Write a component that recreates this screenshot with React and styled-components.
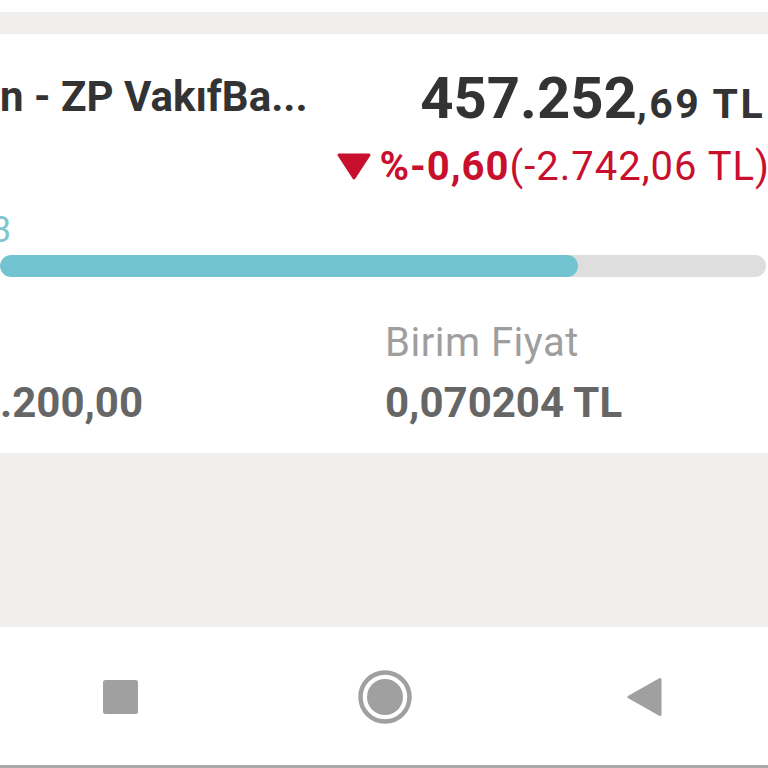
import React from "react";
import styled, { createGlobalStyle } from "styled-components";

const GlobalStyle = createGlobalStyle`
  html, body { margin: 0; padding: 0; background: #ffffff; overflow: hidden; }
  body { font-family: Roboto, "Noto Sans", "Liberation Sans", sans-serif; }
  * { box-sizing: border-box; }
`;

const Screen = styled.div`
  width: 768px;
  height: 768px;
  display: flex;
  flex-direction: column;
  overflow: hidden;
  background: #ffffff;
`;

const StatusGap = styled.div`
  height: 12px;
  flex: none;
  background: #ffffff;
`;

const Band = styled.div`
  height: ${(p) => p.$h}px;
  flex: ${(p) => (p.$h ? "none" : "1")};
  background: #f0efee;
`;

const Card = styled.section`
  height: 419px;
  flex: none;
  background: #ffffff;
  display: flex;
  flex-direction: column;
  padding-top: 35px;
`;

const HeaderRow = styled.div`
  display: flex;
  justify-content: space-between;
  align-items: flex-start;
`;

const Title = styled.h2`
  margin: 6px 0 0 0;
  font-size: 42px;
  line-height: 43px;
  font-weight: 700;
  color: #333333;
  white-space: nowrap;
`;

const RightCol = styled.div`
  display: flex;
  flex-direction: column;
  align-items: flex-end;
`;

const Amount = styled.div`
  margin-right: 3px;
  font-weight: 700;
  color: #333333;
  font-size: 58px;
  line-height: 58px;
  white-space: nowrap;
`;

const AmountCents = styled.span`
  font-size: 41px;
  line-height: 1;
  letter-spacing: 2.4px;
`;

const Change = styled.div`
  display: flex;
  align-items: center;
  margin-top: 20px;
  margin-right: -2px;
  color: #c8102e;
  font-size: 40px;
  line-height: 39px;
  white-space: nowrap;
  letter-spacing: 1px;
`;

const DownArrow = styled.svg`
  width: 34px;
  height: 27px;
  margin-right: 8px;
  flex: none;
`;

const Strong = styled.b`
  font-weight: 700;
`;

const Fraction = styled.div`
  margin-top: 26px;
  margin-left: -9px;
  font-size: 36px;
  line-height: 36px;
  color: #7fc7d1;
`;

const Track = styled.div`
  margin-top: 7px;
  margin-right: 2px;
  height: 22px;
  border-radius: 11px;
  background: #dedede;
  overflow: hidden;
  display: flex;
`;

const Fill = styled.div`
  height: 100%;
  border-radius: 11px;
  background: #72c4d0;
`;

const Stats = styled.div`
  display: grid;
  grid-template-columns: 385px 1fr;
  margin-top: 46px;
`;

const Stat = styled.div`
  display: flex;
  flex-direction: column;
`;

const StatLabel = styled.div`
  font-size: 40px;
  line-height: 40px;
  height: 40px;
  color: #9e9e9e;
  letter-spacing: 0.5px;
`;

const StatValue = styled.div`
  margin-top: 19px;
  font-size: 42px;
  line-height: 42px;
  font-weight: 700;
  color: #666666;
  white-space: nowrap;
`;

const NavBar = styled.nav`
  height: 138px;
  flex: none;
  background: #ffffff;
  display: flex;
  align-items: center;
  padding-left: 103px;
`;

const NavButton = styled.div`
  display: flex;
  align-items: center;
  justify-content: center;
  margin-top: 2px;
  margin-left: ${(p) => p.$ml || 0}px;
`;

const BottomLine = styled.div`
  height: 3px;
  flex: none;
  background: #a9a9a9;
`;

export default function App() {
  const progress = 578;
  return (
    <>
      <GlobalStyle />
      <Screen>
        <StatusGap />
        <Band $h={22} />
        <Card>
          <HeaderRow>
            <Title>n - ZP VakıfBa...</Title>
            <RightCol>
              <Amount>
                457.252<AmountCents>,69 TL</AmountCents>
              </Amount>
              <Change>
                <DownArrow viewBox="0 0 34 27">
                  <path d="M2 2 L32 2 L17 25 Z" fill="#c8102e" stroke="#c8102e" strokeWidth="3" strokeLinejoin="round" />
                </DownArrow>
                <Strong>%-0,60</Strong>(-2.742,06 TL)
              </Change>
            </RightCol>
          </HeaderRow>
          <Fraction>3</Fraction>
          <Track>
            <Fill style={{ width: progress }} />
          </Track>
          <Stats>
            <Stat>
              <StatLabel />
              <StatValue>.200,00</StatValue>
            </Stat>
            <Stat>
              <StatLabel>Birim Fiyat</StatLabel>
              <StatValue>0,070204 TL</StatValue>
            </Stat>
          </Stats>
        </Card>
        <Band />
        <NavBar>
          <NavButton>
            <svg width="35" height="34" viewBox="0 0 35 34">
              <rect x="0" y="0" width="35" height="34" rx="2.5" fill="#a0a0a0" />
            </svg>
          </NavButton>
          <NavButton $ml={220}>
            <svg width="54" height="54" viewBox="0 0 54 54">
              <circle cx="27" cy="27" r="24.5" fill="none" stroke="#a0a0a0" strokeWidth="4.5" />
              <circle cx="27" cy="27" r="18" fill="#a0a0a0" />
            </svg>
          </NavButton>
          <NavButton $ml={215}>
            <svg width="35" height="40" viewBox="0 0 35 40">
              <path d="M33 2.5 L33 37.5 L2 20 Z" fill="#a0a0a0" stroke="#a0a0a0" strokeWidth="3" strokeLinejoin="round" />
            </svg>
          </NavButton>
        </NavBar>
        <BottomLine />
      </Screen>
    </>
  );
}
